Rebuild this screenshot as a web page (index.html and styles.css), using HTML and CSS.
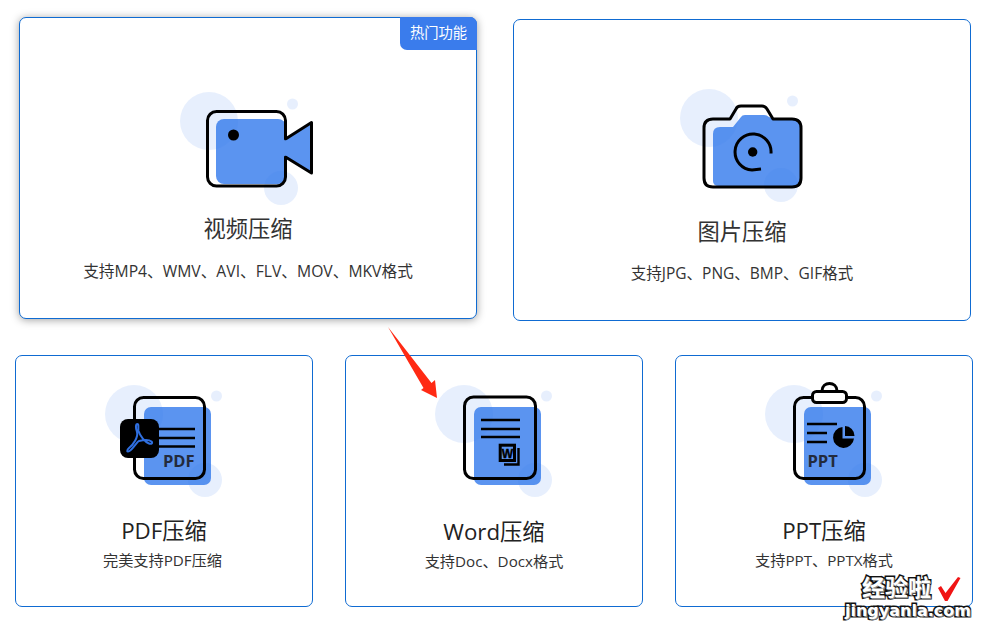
FILE: index.html
```html
<!DOCTYPE html>
<html lang="zh-CN">
<head>
    <meta charset="UTF-8">
    <meta name="viewport" content="width=device-width, initial-scale=1.0">
    <title>压缩工具</title>
    <link rel="stylesheet" href="styles.css">
</head>
<body>
    <div class="page">
        <div class="row row-top">
            <div class="card card-hot">
                <span class="badge">热门功能</span>
                <svg class="icon" width="150" height="120" viewBox="173 85 150 120">
                    <rect class="fill" x="216" y="119" width="70" height="65" rx="8"/>
                    <polygon class="fill" points="284,139 311.500,122.500 311.500,173 284,157"/>
                    <circle class="blob" cx="209" cy="121" r="29"/>
                    <circle class="blob" cx="292.500" cy="104" r="5.500"/>
                    <circle class="blob" cx="281" cy="188" r="17"/>
                    <path class="line" d="M285.500 139L311.500 122.500V173L285.500 157V177A9 9 0 0 1 276.500 186H216.500A9 9 0 0 1 207.500 177V120.500A9 9 0 0 1 216.500 111.500H276.500A9 9 0 0 1 285.500 120.500Z"/>
                    <rect class="fill" x="284" y="140.500" width="3" height="15"/>
                    <circle class="dot" cx="233.500" cy="135" r="5.500"/>
                </svg>
                <div class="title">视频压缩</div>
                <div class="desc desc-wide">支持MP4、WMV、AVI、FLV、MOV、MKV格式</div>
            </div>
            <div class="card card-photo">
                <svg class="icon" width="150" height="120" viewBox="667 87 150 120">
                    <path class="fill" d="M720 127H733L741 117Q742 115 745 115H764Q767 115 769 117L775 119H796Q801 119 801 124V181Q801 186 796 186H719Q713 186 713 181V134Q713 127 720 127Z"/>
                    <circle class="blob" cx="709" cy="118" r="29"/>
                    <circle class="blob" cx="792.500" cy="101" r="5.500"/>
                    <circle class="blob" cx="781" cy="185" r="17"/>
                    <path class="line" d="M713 119H730L736 109Q737 106 741 106H762Q765 106 767 109L773 119H792Q801 119 801 128V178Q801 187 792 187H713Q704 187 704 178V128Q704 119 713 119Z"/>
                    <path class="line" d="M771 153.500A18 18 0 1 0 752 170L761 169"/>
                    <circle class="dot" cx="752.700" cy="152" r="4.700"/>
                </svg>
                <div class="title">图片压缩</div>
                <div class="desc desc-wide">支持JPG、PNG、BMP、GIF格式</div>
            </div>
        </div>
        <div class="row row-bottom">
            <div class="card card-small card-pdf">
                <svg class="icon" width="150" height="120" viewBox="89 378 150 120">
                    <rect class="fill" x="144" y="407" width="67" height="78" rx="7"/>
                    <circle class="blob" cx="134" cy="414" r="29"/>
                    <circle class="blob" cx="216.500" cy="396" r="5.500"/>
                    <circle class="blob" cx="205" cy="480" r="17"/>
                    <rect class="line" x="134.500" y="397.500" width="70" height="81" rx="9"/>
                    <path class="thin" d="M158 429H195M158 438H195M158 446.500H195"/>
                    <rect class="badge-black" x="120" y="419" width="39" height="39" rx="8"/>
                    <path class="acrobat" d="M137.500 424C135.500 424 135.500 428 137 432C138.500 437 133 445 129 448C126 450.500 127 452.500 129.500 451C133 449 137 441.500 139 441C143 440 149 439.500 151.500 441.500C153 443 151.500 444.500 149 443.500C145 442 140 436 138.500 431C138 428 139 424 137.500 424Z"/>
                    <text class="doc-label" x="163" y="467">PDF</text>
                </svg>
                <div class="title">PDF压缩</div>
                <div class="desc">完美支持PDF压缩</div>
            </div>
            <div class="card card-small card-word">
                <svg class="icon" width="150" height="120" viewBox="419 378 150 120">
                    <rect class="fill" x="474" y="407" width="67" height="78" rx="7"/>
                    <circle class="blob" cx="464" cy="414" r="29"/>
                    <circle class="blob" cx="546.500" cy="396" r="5.500"/>
                    <circle class="blob" cx="535" cy="480" r="17"/>
                    <rect class="line" x="464.500" y="397" width="71" height="81.500" rx="9"/>
                    <path class="thin" d="M481 420H520M481 429H520M481 437H520"/>
                    <rect class="thick" x="500.200" y="445.200" width="14.300" height="15.300"/>
                    <path class="thin" d="M518.500 448V464.500H504"/>
                    <text class="w-label" x="507.300" y="457.800">W</text>
                </svg>
                <div class="title">Word压缩</div>
                <div class="desc">支持Doc、Docx格式</div>
            </div>
            <div class="card card-small">
                <svg class="icon" width="150" height="120" viewBox="749 378 150 120">
                    <rect class="fill" x="804" y="407" width="67" height="78" rx="7"/>
                    <circle class="blob" cx="794" cy="414" r="29"/>
                    <circle class="blob" cx="876.500" cy="396" r="5.500"/>
                    <circle class="blob" cx="865" cy="480" r="17"/>
                    <rect class="line" x="794.500" y="397.500" width="70" height="81" rx="9"/>
                    <rect class="line line-white" x="812.500" y="391.500" width="34" height="11" rx="4"/>
                    <path class="line" d="M822 391C822 381 837 381 837 391"/>
                    <path class="thin" d="M807 424H837M807 433H827M807 442H827"/>
                    <path class="dot" d="M842.500 427A10.500 10.500 0 1 0 854 438.500H842.500Z"/>
                    <path class="dot" d="M845 426A10 10 0 0 1 854.500 436H845Z"/>
                    <text class="doc-label" x="807.500" y="467">PPT</text>
                </svg>
                <div class="title">PPT压缩</div>
                <div class="desc">支持PPT、PPTX格式</div>
            </div>
        </div>
        <svg class="arrow" width="60" height="80" viewBox="380 322 60 80">
            <polygon points="388,327 431.500,383 435,380 437,398 421,390 423.500,388"/>
        </svg>
        <div class="mark">
            <div class="mark-top">
                <span class="mark-cn">经验啦</span>
                <svg class="mark-check" width="24" height="26" viewBox="939 575 24 26">
                    <polygon points="940,587 943,585 947.500,592 960,576 962.500,577 949.500,600 947,600"/>
                </svg>
            </div>
            <div class="mark-url">jingyanla.com</div>
        </div>
    </div>
</body>
</html>
```

FILE: styles.css
```css
:root {
    --border: #0f6bd2;
    --blue: #5b94f0;
    --text: #333;
}
html, body {
    margin: 0;
    padding: 0;
    background: #fff;
}
.page {
    position: relative;
    width: 984px;
    height: 626px;
    overflow: hidden;
    font-family: "Open Sans", "Noto Sans CJK SC", sans-serif;
    color: var(--text);
}
.row {
    display: flex;
}
.row-top {
    gap: 36px;
    padding: 17px 0 0 19px;
}
.row-bottom {
    gap: 32px;
    padding-left: 15px;
    margin-top: 34px;
}
.card {
    position: relative;
    box-sizing: border-box;
    width: 458px;
    height: 302px;
    padding-top: 67px;
    display: flex;
    flex-direction: column;
    align-items: center;
    background: #fff;
    border: 1px solid var(--border);
    border-radius: 7px;
}
.card-hot {
    box-shadow: 0 1px 9px rgba(0, 0, 0, 0.38);
}
.card-photo {
    margin-top: 2px;
}
.card-small {
    width: 298px;
    height: 252px;
    padding-top: 22px;
}
.badge {
    position: absolute;
    top: -1px;
    right: -1px;
    width: 77px;
    height: 33px;
    line-height: 32px;
    text-align: center;
    font-size: 14.3px;
    color: #fff;
    background: #3a7cec;
    border-radius: 0 7px 0 7px;
}
.icon {
    display: block;
    flex: none;
}
.title {
    margin-top: 9px;
    height: 30px;
    line-height: 30px;
    font-size: 22.3px;
    color: #333;
}
.desc {
    height: 20px;
    line-height: 20px;
    font-size: 15.2px;
    margin-top: 4px;
}
.desc-wide {
    margin-top: 17px;
    font-size: 15.7px;
}
.card-photo .title {
    margin-top: 10px;
}
.card-photo .desc {
    margin-top: 16px;
    font-size: 15.5px;
}
.card-small .title {
    margin-top: 18px;
    color: #222;
}
.card-word .title {
    margin-top: 19px;
}
.card-pdf .desc {
    margin-right: 3px;
}
.fill {
    fill: var(--blue);
}
.blob {
    fill: rgba(60, 120, 235, 0.12);
}
.line {
    fill: none;
    stroke: #000;
    stroke-width: 3;
    stroke-linejoin: round;
}
.line-white {
    fill: #fff;
}
.thin {
    fill: none;
    stroke: #000;
    stroke-width: 2.4;
}
.thick {
    fill: none;
    stroke: #000;
    stroke-width: 3;
}
.dot,
.badge-black {
    fill: #000;
}
.acrobat {
    fill: none;
    stroke: #2f6fe0;
    stroke-width: 2;
    stroke-linejoin: round;
}
.doc-label {
    font-family: "Open Sans", sans-serif;
    font-weight: 700;
    font-size: 16.5px;
    fill: #232b3d;
}
.w-label {
    font-family: "Liberation Sans", sans-serif;
    font-weight: 700;
    font-size: 12px;
    text-anchor: middle;
    fill: #000;
    stroke: #000;
    stroke-width: 0.4;
}
.arrow {
    position: absolute;
    left: 380px;
    top: 322px;
}
.arrow polygon {
    fill: #ff2a14;
}
.mark {
    position: absolute;
    left: 845px;
    top: 572px;
    width: 130px;
    font-weight: 700;
    color: #fff;
}
.mark-top {
    display: flex;
    align-items: center;
    height: 29px;
    padding-left: 17px;
}
.mark-cn {
    font-family: "Noto Sans CJK SC", sans-serif;
    font-size: 23px;
    line-height: 29px;
    -webkit-text-stroke: 3px #111;
    paint-order: stroke fill;
    text-shadow: 1px 1px 0 #888;
}
.mark-check {
    display: block;
    margin: 4px 0 0 6px;
}
.mark-check polygon {
    fill: #f01414;
}
.mark-url {
    font-family: "DejaVu Sans", sans-serif;
    font-size: 16px;
    line-height: 19px;
    -webkit-text-stroke: 3px #111;
    paint-order: stroke fill;
    text-shadow: 1px 1px 0 #888;
}
```
